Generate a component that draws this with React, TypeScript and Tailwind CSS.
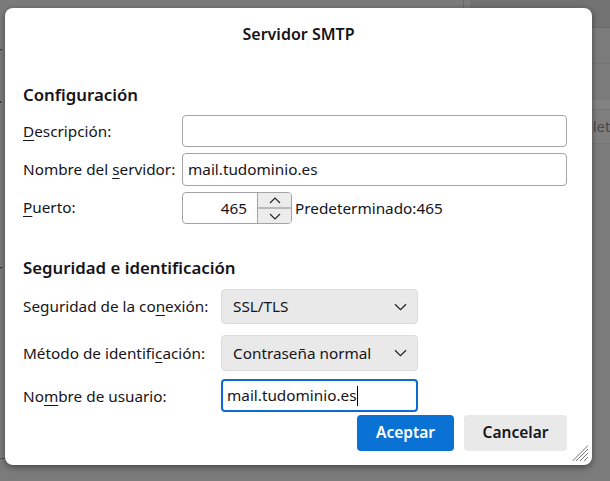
import React from "react";

const font = { fontFamily: '"Noto Sans", "Segoe UI", sans-serif' };

function U({ children }: { children: React.ReactNode }) {
  return <span className="underline underline-offset-[3px] decoration-1">{children}</span>;
}

function Chevron() {
  return (
    <svg width="13" height="8" viewBox="0 0 13 8" fill="none" className="shrink-0">
      <path d="M1 1.2 L6.5 6.6 L12 1.2" stroke="#222" strokeWidth="1.2" />
    </svg>
  );
}

function SmallChev({ up }: { up?: boolean }) {
  return (
    <svg width="12" height="7" viewBox="0 0 12 7" fill="none">
      <path d={up ? "M1 6 L6 1 L11 6" : "M1 1 L6 6 L11 1"} stroke="#222" strokeWidth="1.1" />
    </svg>
  );
}

export default function App() {
  return (
    <div className="relative w-[610px] h-[481px] overflow-hidden bg-[#7b7b7b]" style={font}>
      {/* faint background content */}
      <div className="absolute left-[463px] top-0 w-px h-[26px] bg-[#6a6a6a]" />
      <div className="absolute left-[470px] top-0 w-[140px] h-[28px] bg-[#727272] border-b border-[#6c6c6c]" />
      <div className="absolute left-[520px] top-[4px] text-[15px] text-[#2a2a2a]">Edit</div>
      <div className="absolute left-[470px] top-[63px] w-[140px] h-px bg-[#747474]" />
      <div className="absolute left-[470px] top-[100px] w-[140px] h-[9px] bg-[#828282]" />
      <div className="absolute left-[470px] top-[109px] w-[140px] h-[35px] bg-[#7e7e7e] border-y border-[#757575]" />
      <div className="absolute left-[575px] top-[115px] text-[15px] text-[#4a4a4a]">delet</div>
      <div className="absolute left-[-4px] top-[40px] text-[15px] text-[#1c3d66]">r</div>
      <div className="absolute left-[-2px] top-[86px] text-[15px] text-[#222]">.</div>
      <div className="absolute left-[-4px] top-[258px] text-[15px] text-[#1c3d66]">r</div>
      <div className="absolute left-0 top-[458px] w-[6px] h-px bg-[#555]" />

      {/* dialog */}
      <div className="absolute left-[5px] top-[8px] w-[587px] h-[457px] bg-white rounded-[8px] shadow-[0_2px_6px_rgba(0,0,0,0.45)] text-[#15141a] text-[15.3px]">
        <div className="h-[50px] flex items-center justify-center pt-[1px] font-semibold text-[16px]">
          Servidor SMTP
        </div>

        <div className="pl-[18px] pr-[25px]">
          <div className="mt-[25px] h-[24px] flex items-center font-semibold text-[16.8px]">Configuración</div>

          <div className="mt-[8px] grid grid-cols-[159px_1fr] gap-y-[6px] items-center">
            <div><U>D</U>escripción:</div>
            <div className="h-[32px] border border-[#a3a3a3] rounded-[4px]" />

            <div>Nombre del <U>s</U>ervidor:</div>
            <div className="h-[33px] border border-[#a3a3a3] rounded-[4px] flex items-center px-[5px]">
              mail.tudominio.es
            </div>

            <div className="self-start pt-[4px]"><U>P</U>uerto:</div>
            <div className="flex items-center">
              <div className="w-[110px] h-[32px] border border-[#a3a3a3] rounded-[4px] flex overflow-hidden">
                <div className="flex-1 flex items-center justify-end pr-[10px]">465</div>
                <div className="w-[34px] border-l border-[#a3a3a3] flex flex-col bg-[#ececec]">
                  <div className="flex-1 flex items-center justify-center border-b-2 border-[#b9b9b9]">
                    <SmallChev up />
                  </div>
                  <div className="flex-1 flex items-center justify-center">
                    <SmallChev />
                  </div>
                </div>
              </div>
              <span className="ml-[3px]">Predeterminado:465</span>
            </div>
          </div>

          <div className="mt-[32px] h-[24px] flex items-center font-semibold text-[16.8px]">Seguridad e identificación</div>

          <div className="mt-[9px] grid grid-cols-[198px_197px] items-center">
            <div>Seguridad de la co<U>n</U>exión:</div>
            <div className="h-[35px] bg-[#e9e9e9] border border-[#dcdcdc] rounded-[4px] flex items-center justify-between pl-[11px] pr-[10px]">
              <span>SSL/TLS</span>
              <Chevron />
            </div>

            <div className="mt-[11px]">Método de identifi<U>c</U>ación:</div>
            <div className="mt-[11px] h-[36px] bg-[#e9e9e9] border border-[#dcdcdc] rounded-[4px] flex items-center justify-between pl-[11px] pr-[10px]">
              <span>Contraseña normal</span>
              <Chevron />
            </div>

            <div className="mt-[8px] self-start pt-[6px]">No<U>m</U>bre de usuario:</div>
            <div className="mt-[8px] h-[33px] border-2 border-[#0a6cd0] rounded-[4px] flex items-center px-[4px]">
              <span>mail.tudominio.es</span>
              <span className="w-px h-[20px] bg-black ml-[1px]" />
            </div>
          </div>

          <div className="mt-[3px] flex justify-end gap-[10px]">
            <button className="w-[97px] h-[36px] rounded-[4px] bg-[#0b72d5] text-white font-semibold text-[15.5px]">
              Aceptar
            </button>
            <button className="w-[103px] h-[36px] rounded-[4px] bg-[#e9e9e9] text-[#15141a] font-semibold text-[15.5px]">
              Cancelar
            </button>
          </div>
        </div>

        {/* resize grip */}
        <svg className="absolute right-[3px] bottom-[3px]" width="17" height="17" viewBox="0 0 17 17">
          <path d="M16 4 L4 16 M16 8 L8 16 M16 12 L12 16 M16 0.5 L0.5 16" stroke="#777" strokeWidth="1" />
        </svg>
      </div>
    </div>
  );
}
